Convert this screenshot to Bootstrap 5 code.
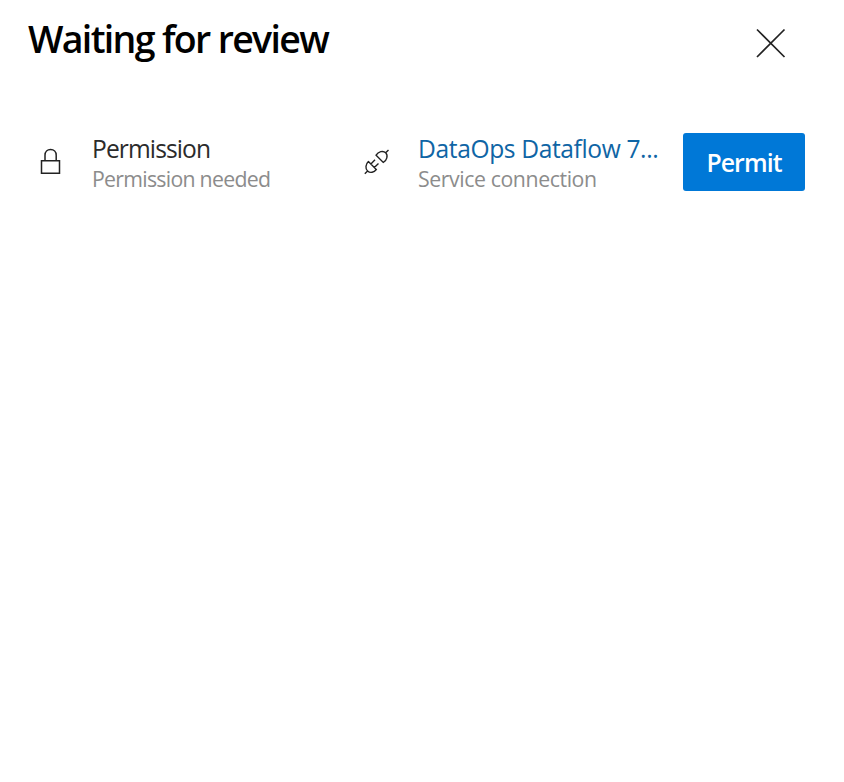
<!DOCTYPE html>
<html lang="en">
<head>
<meta charset="utf-8">
<meta name="viewport" content="width=device-width, initial-scale=1">
<title>Waiting for review</title>
<link href="https://cdn.jsdelivr.net/npm/bootstrap@5.3.0/dist/css/bootstrap.min.css" rel="stylesheet">
<style>
body { font-family: "Segoe UI", "Open Sans", "Noto Sans", sans-serif; color: #000; }
.panel-head { height: 133px; padding: 13px 58px 0 28px; }
.panel-title { font-size: 37.5px; line-height: 52px; font-weight: 600; letter-spacing: -1.67px; }
.close-btn { width: 30px; height: 30px; margin-top: 15px; }
.check-row { height: 58px; padding: 0 39px 0 40px; }
.cell-icon { width: 22px; margin-right: 30px; }
.cell-plug { width: 28px; margin-right: 27px; }
.cell-permission { width: 323px; }
.cell-resource { width: 247px; }
.line-main { font-size: 24.6px; line-height: 34px; color: #2b2b2b; letter-spacing: -.9px; }
.line-link { color: #0f65a5; letter-spacing: -.38px; }
.line-sub { font-size: 21.3px; line-height: 26px; color: #8c8c8c; letter-spacing: -.73px; }
.cell-resource .line-sub { letter-spacing: -.42px; }
.permit-btn { width: 122px; height: 58px; background: #0078d7; border-radius: 3px; color: #fff; font-size: 24.8px; font-weight: 600; letter-spacing: -.9px; padding-top: 2px; }
.permit-btn:hover { background: #106ebe; color: #fff; }
</style>
</head>
<body class="bg-white">
<header class="panel-head d-flex justify-content-between align-items-start">
  <h1 class="panel-title m-0 text-nowrap">Waiting for review</h1>
  <button class="close-btn btn p-0 border-0 d-flex" type="button" aria-label="Close">
    <svg width="30" height="30" viewBox="0 0 30 30" fill="none" stroke="#222" stroke-width="1.7"><path d="M1 1.5 28.500 29M28.500 1.500 1 29"/></svg>
  </button>
</header>
<main class="check-row d-flex">
  <div class="cell-permission d-flex align-items-center flex-shrink-0">
    <svg class="cell-icon flex-shrink-0" width="22" height="28" viewBox="0 0 22 28" fill="none" stroke="#222" stroke-width="1.5"><path d="M1.500 12.700H19.500V25.300H1.500ZM5 12.700V7.200C5 3.800 7.400 1.600 10.600 1.600S16.200 3.800 16.200 7.200V12.700"/></svg>
    <div class="text-nowrap">
      <div class="line-main">Permission</div>
      <div class="line-sub">Permission needed</div>
    </div>
  </div>
  <div class="d-flex align-items-center flex-shrink-0">
    <svg class="cell-plug flex-shrink-0" width="28" height="28" viewBox="0 0 28 28" fill="none" stroke="#222" stroke-width="1.4"><path d="M1.800 25.800 4.600 23M5.400 13.600 13.300 21.500C11 24.500 7.200 25.400 4.600 23S2.600 16.200 5.400 13.600ZM7.900 15.900 12 11.800M11.300 19.500 15.500 15.500M25.500 2 22.700 4.800M13.100 7.200 20.300 14.400C23.900 12.400 25.300 7.400 22.700 4.800S15.200 3.600 13.100 7.200Z"/></svg>
    <div class="cell-resource">
      <a class="line-main line-link d-block text-truncate text-decoration-none" href="#">DataOps Dataflow 7...</a>
      <div class="line-sub">Service connection</div>
    </div>
  </div>
  <button class="permit-btn btn border-0 px-0 pb-0 ms-auto flex-shrink-0" type="button">Permit</button>
</main>
<script src="https://cdn.jsdelivr.net/npm/bootstrap@5.3.0/dist/js/bootstrap.bundle.min.js"></script>
</body>
</html>
